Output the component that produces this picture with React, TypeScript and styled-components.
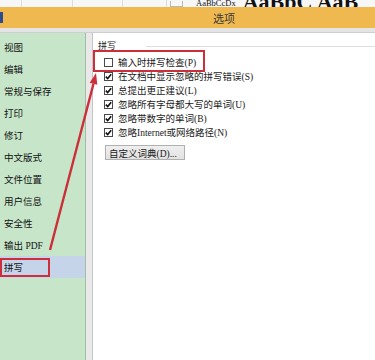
import React, { ReactElement } from "react";
import styled, { createGlobalStyle } from "styled-components";

const GlobalStyle = createGlobalStyle`
  html, body {
    margin: 0;
    padding: 0;
    background: #ffffff;
  }
  body {
    font-family: "Liberation Serif", "Noto Sans CJK SC", serif;
  }
`;

const Page = styled.div`
  position: relative;
  width: 375px;
  height: 360px;
  overflow: hidden;
  display: flex;
  flex-direction: column;
  background: #ffffff;
`;

const Ribbon = styled.div`
  height: 7px;
  flex: none;
  display: flex;
  align-items: flex-end;
  overflow: hidden;
  background: #f7f7f7;
`;

const RibbonSep = styled.div<{ w: number }>`
  width: ${(p) => p.w}px;
  height: 7px;
  flex: none;
  border-right: 1px solid #dcdcdc;
  box-sizing: border-box;
`;

const RibbonBox = styled.div`
  width: 13px;
  height: 6px;
  margin: 0 13px 0 3px;
  flex: none;
  border: 1px solid #b9b9b9;
  border-top: none;
  box-sizing: border-box;
`;

const StyleSample = styled.span<{ big?: boolean }>`
  flex: none;
  font-family: "Liberation Serif", serif;
  font-size: ${(p) => (p.big ? 22 : 8.5)}px;
  font-weight: ${(p) => (p.big ? 700 : 400)};
  line-height: ${(p) => (p.big ? 10 : 8)}px;
  color: #111;
  margin-right: ${(p) => (p.big ? 0 : 7)}px;
  white-space: nowrap;
`;

const TitleBar = styled.div`
  height: 21px;
  flex: none;
  display: flex;
  align-items: center;
  background: #efb94f;
`;

const AppMark = styled.div`
  width: 3px;
  height: 11px;
  background: #2c4c8c;
  flex: none;
`;

const TitleText = styled.span`
  margin-left: 210px;
  font-family: "Noto Sans CJK SC", sans-serif;
  font-size: 11px;
  color: #3a3a3a;
`;

const Band = styled.div`
  height: 4px;
  flex: none;
  background: #e4e4e4;
  border-bottom: 1px solid #cfcfcf;
`;

const Main = styled.div`
  flex: 1;
  display: flex;
  min-height: 0;
`;

const Sidebar = styled.div`
  width: 86px;
  flex: none;
  box-sizing: border-box;
  padding-top: 3px;
  background: #c7e6c9;
  border-right: 1px solid #a3bca5;
`;

const NavItem = styled.div<{ active?: boolean }>`
  height: 22px;
  display: flex;
  align-items: center;
  padding-left: 4px;
  font-family: "Liberation Serif", "Noto Sans CJK SC", serif;
  font-size: 9.5px;
  color: #111;
  background: ${(p) => (p.active ? "#c6d4ea" : "transparent")};
  white-space: nowrap;
`;

const Marked = styled.span`
  display: flex;
  align-items: center;
  width: 50px;
  height: 19px;
  margin-left: -4px;
  padding-left: 2px;
  box-sizing: border-box;
  border: 2px solid #cc2f3a;
`;

const Divider = styled.div`
  width: 7px;
  flex: none;
  box-sizing: border-box;
  background: #e9e9e9;
  border-right: 1px solid #c6c6c6;
`;

const Content = styled.div`
  flex: 1;
  background: #ffffff;
`;

const GroupHead = styled.div`
  height: 22px;
  box-sizing: border-box;
  padding: 7px 0 0 5px;
  display: flex;
  align-items: flex-start;
  font-size: 9px;
  line-height: 12px;
  color: #222;
  &::after {
    content: "";
    flex: 1;
    margin: 6px 0 0 30px;
    border-top: 1px solid #dedede;
  }
`;

const Options = styled.div`
  margin-left: 11px;
`;

const OptionRow = styled.div<{ marked?: boolean }>`
  position: relative;
  height: 14px;
  display: flex;
  align-items: center;
  gap: 5px;
  font-size: 9.5px;
  color: #1a1a1a;
  white-space: nowrap;
  &::after {
    content: "";
    display: ${(p) => (p.marked ? "block" : "none")};
    position: absolute;
    left: -11px;
    top: -5px;
    width: 112px;
    height: 22px;
    box-sizing: border-box;
    border: 2px solid #cc2f3a;
  }
`;

const Box = styled.span`
  width: 9px;
  height: 9px;
  flex: none;
  box-sizing: border-box;
  border: 1px solid #4a4a4a;
  background: #fff;
  display: flex;
  align-items: center;
  justify-content: center;
`;

const DictButton = styled.div`
  width: 80px;
  height: 15px;
  margin: 6px 0 0 12px;
  box-sizing: border-box;
  padding-left: 3px;
  display: flex;
  align-items: center;
  font-size: 9.5px;
  color: #1a1a1a;
  background: linear-gradient(#efefef, #e2e2e2);
  border: 1px solid #b0b0b0;
  white-space: nowrap;
`;

const Annotation = styled.svg`
  position: absolute;
  left: 0;
  top: 0;
  pointer-events: none;
`;

const NAV = [
  "视图",
  "编辑",
  "常规与保存",
  "打印",
  "修订",
  "中文版式",
  "文件位置",
  "用户信息",
  "安全性",
  "输出 PDF",
];

const OPTIONS = [
  { label: "输入时拼写检查(P)", checked: false },
  { label: "在文档中显示忽略的拼写错误(S)", checked: true },
  { label: "总提出更正建议(L)", checked: true },
  { label: "忽略所有字母都大写的单词(U)", checked: true },
  { label: "忽略带数字的单词(B)", checked: true },
  { label: "忽略Internet或网络路径(N)", checked: true },
];

function Check({ checked }: { checked: boolean }): ReactElement {
  return (
    <Box>
      {checked && (
        <svg width="7" height="7" viewBox="0 0 7 7">
          <path d="M0.8 3.6 L2.7 5.5 L6.2 1.2" fill="none" stroke="#111" strokeWidth="1.6" />
        </svg>
      )}
    </Box>
  );
}

export default function App(): ReactElement {
  return (
    <Page>
      <GlobalStyle />
      <Ribbon>
        <RibbonSep w={22} />
        <RibbonSep w={51} />
        <RibbonSep w={50} />
        <RibbonSep w={44} />
        <RibbonBox />
        <StyleSample>AaBbCcDx</StyleSample>
        <StyleSample big>AaBbC AaB</StyleSample>
      </Ribbon>
      <TitleBar>
        <AppMark />
        <TitleText>选项</TitleText>
      </TitleBar>
      <Band />
      <Main>
        <Sidebar>
          {NAV.map((item) => (
            <NavItem key={item}>{item}</NavItem>
          ))}
          <NavItem active>
            <Marked>拼写</Marked>
          </NavItem>
        </Sidebar>
        <Divider />
        <Content>
          <GroupHead>拼写</GroupHead>
          <Options>
            {OPTIONS.map((opt, index) => (
              <OptionRow key={opt.label} marked={index === 0}>
                <Check checked={opt.checked} />
                <span>{opt.label}</span>
              </OptionRow>
            ))}
          </Options>
          <DictButton>自定义词典(D)...</DictButton>
        </Content>
      </Main>
      {/* red arrow drawn over the screenshot */}
      <Annotation width="375" height="360" viewBox="0 0 375 360">
        <line x1="50" y1="250" x2="93.5" y2="83.7" stroke="#cc2f3a" strokeWidth="2.4" />
        <polygon points="96,73 97.3,84.8 89.7,82.8" fill="#cc2f3a" />
      </Annotation>
    </Page>
  );
}
